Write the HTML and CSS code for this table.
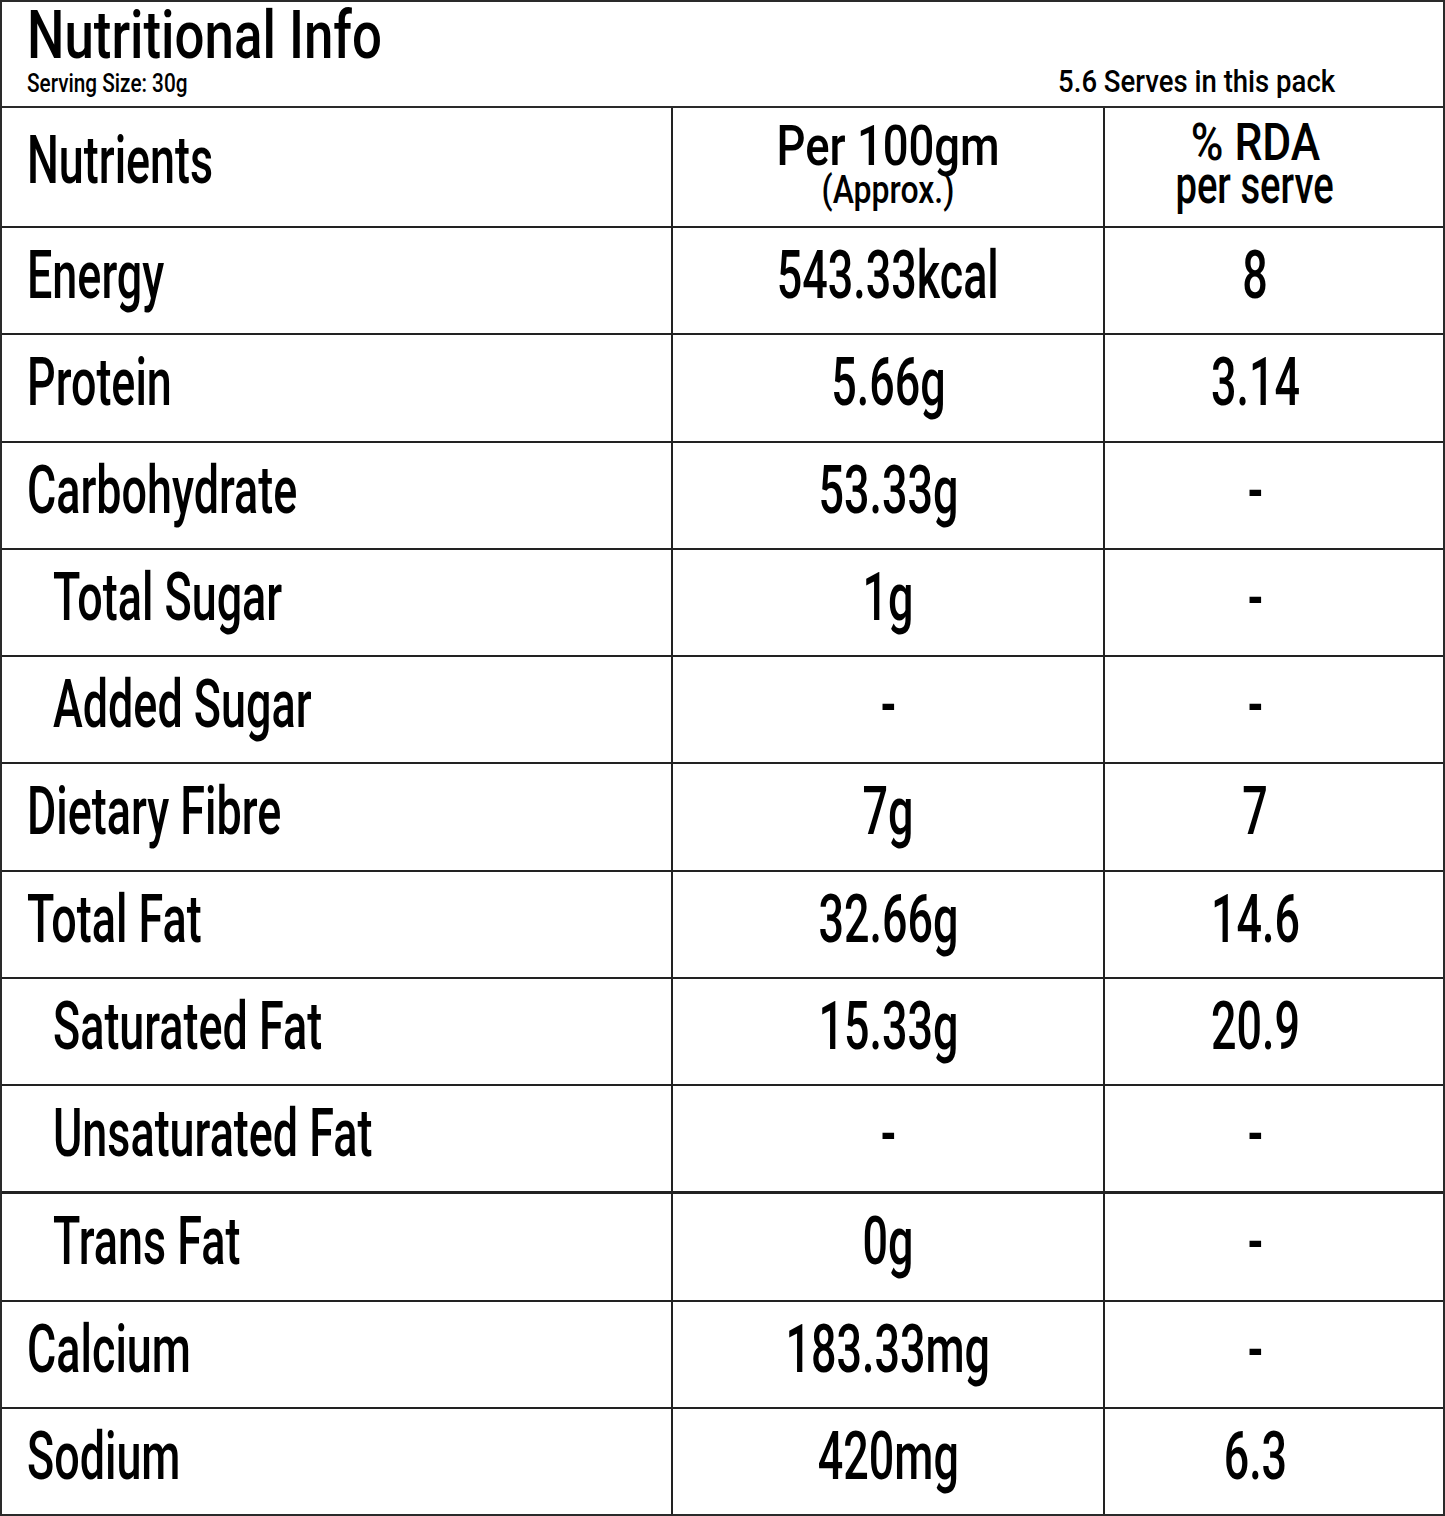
FILE: index.html
```html
<!DOCTYPE html>
<html>
<head>
<meta charset="utf-8">
<link rel="stylesheet" href="styles.css">
</head>
<body>
<div class="panel">
  <div class="head">
    <div class="title"><span class="t">Nutritional Info</span></div>
    <div class="sub">
      <span class="serving t">Serving Size: 30g</span>
      <span class="serves t">5.6 Serves in this pack</span>
    </div>
  </div>
  <div class="row hdr">
    <div class="cell name"><span class="t">Nutrients</span></div>
    <div class="cell val stack">
      <span class="h1 t">Per 100gm</span>
      <span class="h2 t">(Approx.)</span>
    </div>
    <div class="cell rda stack">
      <span class="h1b t">% RDA</span>
      <span class="h2b t">per serve</span>
    </div>
  </div>
  <div class="row"><div class="cell name"><span class="t">Energy</span></div><div class="cell val"><span class="t">543.33kcal</span></div><div class="cell rda"><span class="t">8</span></div></div>
  <div class="row"><div class="cell name"><span class="t">Protein</span></div><div class="cell val"><span class="t">5.66g</span></div><div class="cell rda"><span class="t">3.14</span></div></div>
  <div class="row"><div class="cell name"><span class="t">Carbohydrate</span></div><div class="cell val"><span class="t">53.33g</span></div><div class="cell rda"><span class="t">-</span></div></div>
  <div class="row"><div class="cell name indent"><span class="t">Total Sugar</span></div><div class="cell val"><span class="t">1g</span></div><div class="cell rda"><span class="t">-</span></div></div>
  <div class="row"><div class="cell name indent"><span class="t">Added Sugar</span></div><div class="cell val"><span class="t">-</span></div><div class="cell rda"><span class="t">-</span></div></div>
  <div class="row"><div class="cell name"><span class="t">Dietary Fibre</span></div><div class="cell val"><span class="t">7g</span></div><div class="cell rda"><span class="t">7</span></div></div>
  <div class="row"><div class="cell name"><span class="t">Total Fat</span></div><div class="cell val"><span class="t">32.66g</span></div><div class="cell rda"><span class="t">14.6</span></div></div>
  <div class="row"><div class="cell name indent"><span class="t">Saturated Fat</span></div><div class="cell val"><span class="t">15.33g</span></div><div class="cell rda"><span class="t">20.9</span></div></div>
  <div class="row"><div class="cell name indent"><span class="t">Unsaturated Fat</span></div><div class="cell val"><span class="t">-</span></div><div class="cell rda"><span class="t">-</span></div></div>
  <div class="row thick"><div class="cell name indent"><span class="t">Trans Fat</span></div><div class="cell val"><span class="t">0g</span></div><div class="cell rda"><span class="t">-</span></div></div>
  <div class="row"><div class="cell name"><span class="t">Calcium</span></div><div class="cell val"><span class="t">183.33mg</span></div><div class="cell rda"><span class="t">-</span></div></div>
  <div class="row"><div class="cell name"><span class="t">Sodium</span></div><div class="cell val"><span class="t">420mg</span></div><div class="cell rda"><span class="t">6.3</span></div></div>
</div>
</body>
</html>
```

FILE: styles.css
```css
html, body {
  margin: 0;
  padding: 0;
  background: #fff;
}
body {
  font-family: Roboto, "Liberation Sans", sans-serif;
  font-weight: 500;
  color: #000;
}
.panel {
  width: 1445px;
  height: 1516px;
  box-sizing: border-box;
  border: 2px solid #2a2a2a;
  display: flex;
  flex-direction: column;
}
.t {
  display: inline-block;
  white-space: nowrap;
}
.head {
  height: 106px;
  flex: none;
  box-sizing: border-box;
  padding: 1px 0 0 25px;
  border-bottom: 2px solid #2a2a2a;
}
.title {
  font-size: 66px;
  line-height: 66px;
}
.title .t {
  transform: scaleX(0.8);
  transform-origin: left center;
}
.sub {
  display: flex;
  justify-content: space-between;
  align-items: baseline;
  padding-right: 108px;
  margin-top: -4px;
  line-height: 32px;
}
.serving {
  font-size: 25px;
  transform: scaleX(0.83);
  transform-origin: left center;
}
.serves {
  font-size: 32px;
  transform: scaleX(0.86);
  transform-origin: right center;
}
.row {
  flex: 1 1 0;
  display: grid;
  grid-template-columns: 669px 432px 1fr;
  border-top: 2px solid #222;
  font-size: 67px;
  line-height: 1;
}
.row.hdr {
  flex: none;
  height: 118px;
  border-top: none;
}
.row.thick {
  border-top-width: 3px;
}
.cell {
  display: flex;
  align-items: center;
  padding-bottom: 10px;
  box-sizing: border-box;
}
.hdr .cell {
  padding-bottom: 14px;
}
.cell + .cell {
  border-left: 2px solid #222;
}
.cell .t {
  transform: scaleX(0.67);
}
.name {
  padding-left: 25px;
}
.name .t {
  transform-origin: left center;
}
.name.indent {
  padding-left: 51px;
}
.val, .rda {
  justify-content: center;
}
.rda {
  padding-right: 38px;
}
.val .t, .rda .t {
  transform-origin: center center;
}
.hdr .stack {
  flex-direction: column;
  justify-content: flex-start;
  align-items: center;
  padding-top: 12px;
  padding-bottom: 0;
}
.hdr .rda.stack {
  padding-top: 11px;
}
.cell .h1 {
  font-size: 55px;
  line-height: 52px;
  transform: scaleX(0.826);
}
.cell .h2 {
  font-size: 39px;
  line-height: 36px;
  transform: scaleX(0.82);
}
.cell .h1b {
  font-size: 51px;
  line-height: 48px;
  transform: scaleX(0.87);
}
.cell .h2b {
  font-size: 51px;
  line-height: 38px;
  transform: scaleX(0.75);
}
```
